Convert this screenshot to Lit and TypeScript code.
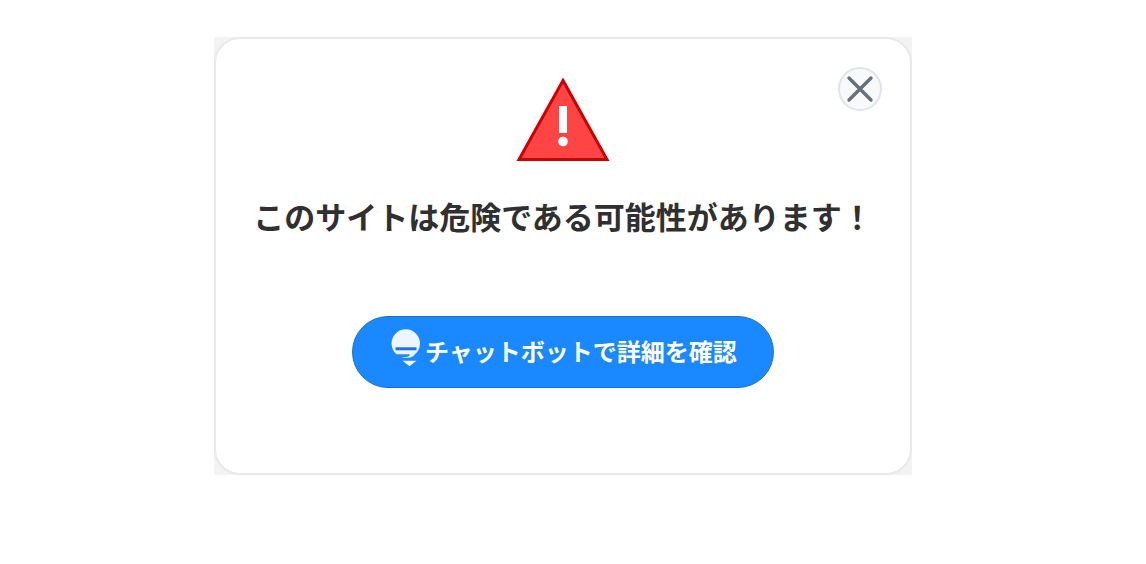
import { LitElement, html, css } from "lit";
import { customElement, state } from "lit/decorators.js";

@customElement("app-root")
export class AppRoot extends LitElement {
  static styles = css`
    :host {
      display: block;
      min-height: 100vh;
      box-sizing: border-box;
      padding: 37px 40px 24px 20px;
      background: #fff;
      font-family: "Noto Sans CJK JP", sans-serif;
    }
    .frame {
      max-width: 698px;
      margin: 0 auto;
      background: #f3f3f3;
    }
    .card {
      position: relative;
      box-sizing: border-box;
      display: flex;
      flex-direction: column;
      align-items: center;
      padding: 38px 24px 85px;
      border: 2px solid #e9e9e9;
      border-radius: 26px;
      background: #fff;
    }
    .close {
      position: absolute;
      top: 28px;
      right: 28px;
      width: 44px;
      height: 44px;
      padding: 0;
      display: grid;
      place-items: center;
      border: 2px solid #e0e4e8;
      border-radius: 50%;
      background: #f8f9fa;
      color: #66707a;
      cursor: pointer;
    }
    .warning {
      display: block;
      width: 94px;
      height: 86px;
    }
    .title {
      margin: 30px 0 77px;
      font-size: 31px;
      line-height: 46px;
      font-weight: 700;
      color: #303030;
      white-space: nowrap;
    }
    .chat {
      display: flex;
      align-items: center;
      justify-content: center;
      gap: 2px;
      height: 72px;
      padding: 0 36px 0 37px;
      border: 1px solid #1a6fc9;
      border-radius: 36px;
      background: #1a88ff;
      color: #fff;
      font-family: inherit;
      font-size: 24px;
      line-height: 36px;
      font-weight: 700;
      white-space: nowrap;
      cursor: pointer;
    }
    .chat span {
      padding-bottom: 2px;
    }
  `;

  @state() private open = true;

  render() {
    if (!this.open) return html``;
    return html`
      <main class="frame">
        <section class="card" role="alertdialog" aria-labelledby="title">
          <button class="close" aria-label="閉じる" @click=${() => (this.open = false)}>
            <svg width="28" height="28" viewBox="0 0 28 28" fill="none" stroke="currentColor"
              stroke-width="3.4" stroke-linecap="round" aria-hidden="true">
              <path d="M3 3L25 25M25 3L3 25" />
            </svg>
          </button>
          <svg class="warning" viewBox="0 0 94 86" aria-hidden="true">
            <path d="M47 3.500L91 82.500H3Z" fill="#ff4444" stroke="#cc0000" stroke-width="3" />
            <rect x="43" y="29" width="8" height="27" fill="#fff" />
            <circle cx="47" cy="64.500" r="4.800" fill="#fff" />
          </svg>
          <h1 class="title" id="title">このサイトは危険である可能性があります！</h1>
          <button class="chat">
            <svg width="33" height="46" viewBox="0 0 33 46" aria-hidden="true">
              <path d="M6.500 25.200A14.200 14.200 0 1 1 25 25.200Q22.500 28.400 18 28.800Q14 29 11.500 28.200Q17 28.200 19.500 27V25.200Z" fill="#edf5ff" />
              <rect x="5.500" y="18.300" width="21" height="3" fill="#1f70e8" />
              <path d="M12.500 31.700H26.500L19.500 37.200Z" fill="#edf5ff" />
            </svg>
            <span>チャットボットで詳細を確認</span>
          </button>
        </section>
      </main>
    `;
  }
}
